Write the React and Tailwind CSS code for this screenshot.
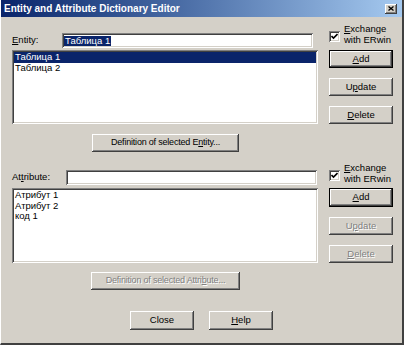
import React from 'react';

const font = "font-['Liberation_Sans',Arial,sans-serif]";
const raised = 'bg-[#d4d0c8] shadow-[inset_-1px_-1px_#404040,inset_1px_1px_#ffffff,inset_-2px_-2px_#808080]';
const sunken = 'bg-white shadow-[inset_1px_1px_#808080,inset_-1px_-1px_#ffffff,inset_2px_2px_#404040,inset_-2px_-2px_#d4d0c8]';
const disabledText = 'text-[#808080] [text-shadow:1px_1px_0_#ffffff]';

const U = ({ children }) => <span className="underline underline-offset-1">{children}</span>;

const Button = ({ children, def, disabled, className = '', textClass = 'text-[9.5px]' }) => (
    <div className={`${def ? 'border border-black' : ''} ${className}`}>
        <div className={`${raised} h-full w-full flex items-center justify-center ${textClass} ${disabled ? disabledText : 'text-black'}`}>
            {children}
        </div>
    </div>
);

const Check = () => (
    <div className="flex items-start">
        <div className={`${sunken} w-[11px] h-[11px] mt-[7px] flex items-center justify-center shrink-0`}>
            <svg width="7" height="7" viewBox="0 0 7 7">
                <path d="M0.5 3 L2.5 5 L6.5 1" stroke="#000" strokeWidth="1.6" fill="none" />
            </svg>
        </div>
        <div className="ml-[4px] text-[9.5px] leading-[10.5px] text-black">
            <U>E</U>xchange<br />with ERwin
        </div>
    </div>
);

const ListBox = ({ items, selected, className = '' }) => (
    <div className={`${sunken} p-[2px] ${className}`}>
        {items.map((it, i) => (
            <div
                key={i}
                className={`h-[10.5px] leading-[10.5px] text-[9.5px] pl-[1px] ${i === selected ? 'bg-[#0a246a] text-white' : 'text-black'}`}
            >
                {it}
            </div>
        ))}
    </div>
);

export default function App() {
    return (
        <div className={`${font} w-[404px] h-[345px] bg-[#d4d0c8] flex flex-col border-r-2 border-b-2 border-r-[#404040] border-b-[#404040] border-l border-l-[#ffffff]`}>
            {/* Title bar */}
            <div className="h-[17px] flex items-center justify-between bg-gradient-to-r from-[#0a246a] to-[#a6caf0] pl-[3px] pr-[5px] shrink-0">
                <span className="text-white font-bold text-[10px]">Entity and Attribute Dictionary Editor</span>
                <div className={`${raised} w-[12px] h-[10px] flex items-center justify-center`}>
                    <svg width="6" height="5" viewBox="0 0 6 5">
                        <path d="M0.5 0.5 L5.5 4.5 M5.5 0.5 L0.5 4.5" stroke="#000" strokeWidth="1.3" />
                    </svg>
                </div>
            </div>

            {/* Entity section */}
            <div className="flex mt-[7px] pl-[11px]">
                <div className="w-[306px] flex flex-col pt-[9px]">
                    <div className="flex items-center h-[15px]">
                        <span className="w-[50px] text-[9.5px] text-black"><U>E</U>ntity:</span>
                        <div className={`${sunken} w-[251px] h-[15px] flex items-center pl-[2px]`}>
                            <span className="bg-[#0a246a] text-white text-[9.5px] leading-[10px] px-[1px]">Таблица 1</span>
                        </div>
                    </div>
                    <ListBox className="mt-[2px] h-[74px]" items={['Таблица 1', 'Таблица 2']} selected={0} />
                </div>
                <div className="ml-[11px] w-[64px] flex flex-col">
                    <div className="h-[26px]"><Check /></div>
                    <Button def className="h-[18px]"><span><U>A</U>dd</span></Button>
                    <Button className="h-[18px] mt-[10px]"><span>U<U>p</U>date</span></Button>
                    <Button className="h-[18px] mt-[10px]"><span><U>D</U>elete</span></Button>
                </div>
            </div>

            <div className="flex pl-[91px] mt-[10px]">
                <Button className="w-[147px] h-[18px]" textClass="text-[9px] tracking-[-0.2px]"><span>Definition of selected E<U>n</U>tity...</span></Button>
            </div>

            {/* Attribute section */}
            <div className="flex mt-[11px] pl-[11px]">
                <div className="w-[306px] flex flex-col pt-[7px]">
                    <div className="flex items-center h-[15px]">
                        <span className="w-[54px] text-[9.5px] text-black">At<U>t</U>ribute:</span>
                        <div className={`${sunken} w-[251px] h-[15px]`} />
                    </div>
                    <ListBox className="mt-[3px] h-[75px]" items={['Атрибут 1', 'Атрибут 2', 'код 1']} selected={-1} />
                </div>
                <div className="ml-[11px] w-[64px] flex flex-col">
                    <div className="h-[25px]"><Check /></div>
                    <Button def className="h-[19px]"><span><U>A</U>dd</span></Button>
                    <Button disabled className="h-[18px] mt-[10px]"><span>U<U>p</U>date</span></Button>
                    <Button disabled className="h-[18px] mt-[10px]"><span><U>D</U>elete</span></Button>
                </div>
            </div>

            <div className="flex pl-[90px] mt-[9px]">
                <Button disabled className="w-[149px] h-[18px]" textClass="text-[9px] tracking-[-0.2px]"><span>Definition of selected Attri<U>b</U>ute...</span></Button>
            </div>

            <div className="flex pl-[129px] mt-[21px] gap-[15px]">
                <Button className="w-[64px] h-[19px]"><span>Close</span></Button>
                <Button className="w-[64px] h-[19px]"><span><U>H</U>elp</span></Button>
            </div>
        </div>
    );
}
